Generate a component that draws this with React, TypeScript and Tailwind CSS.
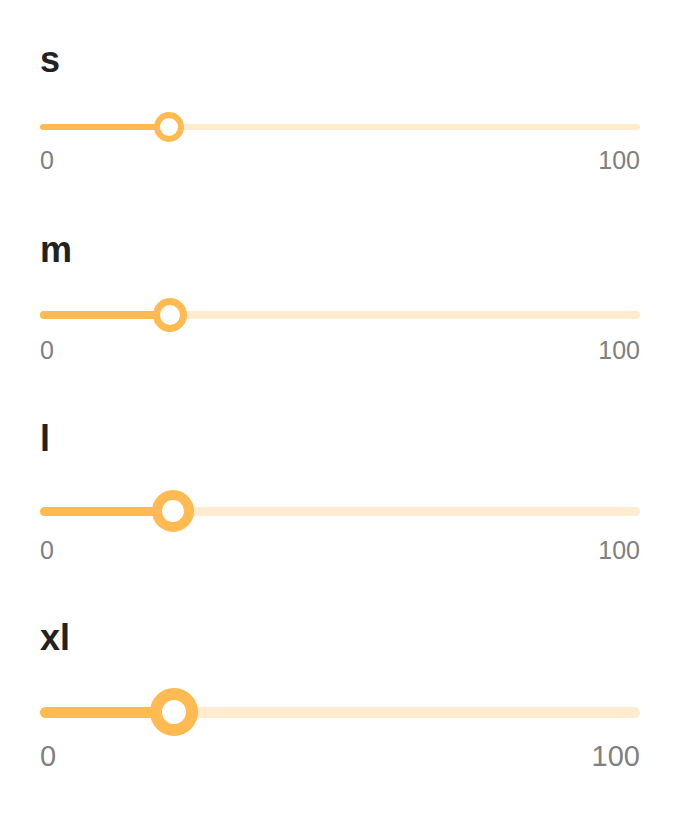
import React from "react";

type Size = {
  label: string;
  labelMt: string;
  sliderMt: string;
  thumb: number;
  rowCls: string;
  thumbCls: string;
  trackCls: string;
  numText: string;
};

const sizes: Size[] = [
  {
    label: "s",
    labelMt: "mt-[42px]",
    sliderMt: "mt-[34px]",
    thumb: 30,
    rowCls: "h-[30px]",
    thumbCls: "w-[30px] h-[30px] border-[6px]",
    trackCls: "h-[6px]",
    numText: "text-[25px]",
  },
  {
    label: "m",
    labelMt: "mt-[59px]",
    sliderMt: "mt-[30px]",
    thumb: 34,
    rowCls: "h-[34px]",
    thumbCls: "w-[34px] h-[34px] border-[7px]",
    trackCls: "h-[8px]",
    numText: "text-[25px]",
  },
  {
    label: "l",
    labelMt: "mt-[58px]",
    sliderMt: "mt-[33px]",
    thumb: 42,
    rowCls: "h-[42px]",
    thumbCls: "w-[42px] h-[42px] border-[10px]",
    trackCls: "h-[9px]",
    numText: "text-[25px]",
  },
  {
    label: "xl",
    labelMt: "mt-[57px]",
    sliderMt: "mt-[32px]",
    thumb: 48,
    rowCls: "h-[48px]",
    thumbCls: "w-[48px] h-[48px] border-[12px]",
    trackCls: "h-[11px]",
    numText: "text-[29px]",
  },
];

const VALUE = 20;

function Slider({ s }: { s: Size }) {
  const pos = `calc(${s.thumb / 2}px + ${VALUE / 100} * (100% - ${s.thumb}px))`;
  return (
    <div className={`relative w-full flex items-center ${s.rowCls}`}>
      <div className={`relative w-full rounded-full bg-[#ffecd0] ${s.trackCls}`}>
        <div className="absolute left-0 top-0 h-full rounded-full bg-[#ffba52]" style={{ width: pos }} />
      </div>
      <div
        className={`absolute top-0 box-border rounded-full border-solid border-[#ffba52] bg-white ${s.thumbCls}`}
        style={{ left: `calc(${pos} - ${s.thumb / 2}px)` }}
      />
    </div>
  );
}

export default function App() {
  return (
    <div className="flex h-[816px] w-[680px] flex-col bg-white px-[40px] font-['Liberation_Sans',Arial,sans-serif]">
      {sizes.map((s) => (
        <div key={s.label} className="flex flex-col">
          <div className={`${s.labelMt} text-[36px] font-bold leading-none text-[#222222]`}>{s.label}</div>
          <div className={s.sliderMt}>
            <Slider s={s} />
          </div>
          <div className={`mt-[6px] flex justify-between leading-none text-[#808080] ${s.numText}`}>
            <span>0</span>
            <span>100</span>
          </div>
        </div>
      ))}
    </div>
  );
}
